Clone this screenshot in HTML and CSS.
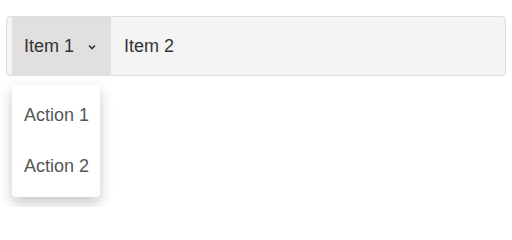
FILE: index.html
```html
<!DOCTYPE html>
<html>
<head>
<meta charset="utf-8">
<link rel="stylesheet" href="styles.css">
</head>
<body>
<div class="page">
  <nav class="navbar">
    <div class="nav-item active">
      <span>Item 1</span>
      <svg class="chev" width="8" height="6" viewBox="0 0 8 6"><path d="M1 1.5 L4 4.5 L7 1.5" fill="none" stroke="#333" stroke-width="1.6"/></svg>
    </div>
    <div class="nav-item second">Item 2</div>
  </nav>
  <div class="dropdown">
    <div class="dd-item">Action 1</div>
    <div class="dd-item">Action 2</div>
  </div>
</div>
</body>
</html>
```

FILE: styles.css
```css
html, body {
  margin: 0;
  padding: 0;
  background: #fff;
}
body {
  font-family: "Liberation Sans", Arial, sans-serif;
  font-size: 18px;
  color: #333;
}
.page {
  display: flex;
  flex-direction: column;
  align-items: flex-start;
  padding: 16px 6px 10px 6px;
}
.navbar {
  display: flex;
  height: 58px;
  width: 493px;
  border: 1px solid #dedede;
  border-radius: 4px;
  background: #f4f4f4;
  padding-left: 5px;
}
.nav-item {
  display: flex;
  align-items: center;
  padding: 0 12px;
  line-height: 21px;
}
.nav-item.active {
  background: #e1dfdf;
  padding-right: 15px;
}
.nav-item.second {
  padding-left: 13px;
}
.chev {
  margin-left: 14px;
  margin-top: 1px;
}
.dropdown {
  margin: 9px 0 0 6px;
  width: 88px;
  background: #fff;
  border-radius: 4px;
  padding: 5px 0;
  box-shadow: 0 6px 14px rgba(0, 0, 0, 0.22);
}
.dd-item {
  padding: 15px 12px;
  line-height: 21px;
  color: #555;
  white-space: nowrap;
}
```
